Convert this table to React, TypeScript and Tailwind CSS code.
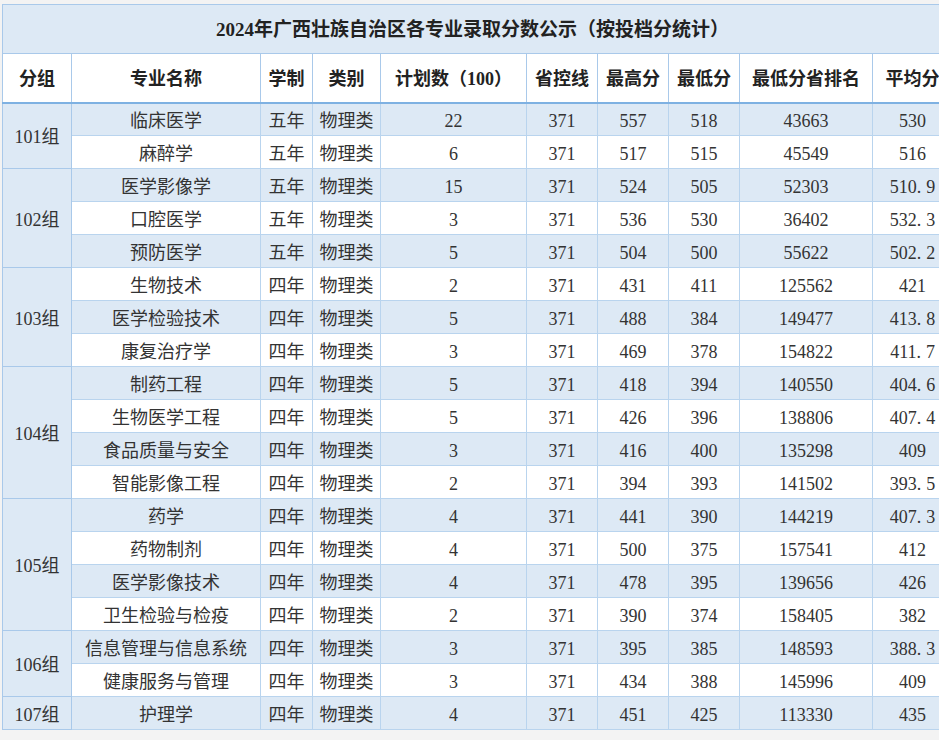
import React from "react";

type Row = [string, string, string, string, string, string, string, string, string];

const groups: { name: string; rows: Row[] }[] = [
  { name: "101组", rows: [
    ["临床医学", "五年", "物理类", "22", "371", "557", "518", "43663", "530"],
    ["麻醉学", "五年", "物理类", "6", "371", "517", "515", "45549", "516"],
  ]},
  { name: "102组", rows: [
    ["医学影像学", "五年", "物理类", "15", "371", "524", "505", "52303", "510.9"],
    ["口腔医学", "五年", "物理类", "3", "371", "536", "530", "36402", "532.3"],
    ["预防医学", "五年", "物理类", "5", "371", "504", "500", "55622", "502.2"],
  ]},
  { name: "103组", rows: [
    ["生物技术", "四年", "物理类", "2", "371", "431", "411", "125562", "421"],
    ["医学检验技术", "四年", "物理类", "5", "371", "488", "384", "149477", "413.8"],
    ["康复治疗学", "四年", "物理类", "3", "371", "469", "378", "154822", "411.7"],
  ]},
  { name: "104组", rows: [
    ["制药工程", "四年", "物理类", "5", "371", "418", "394", "140550", "404.6"],
    ["生物医学工程", "四年", "物理类", "5", "371", "426", "396", "138806", "407.4"],
    ["食品质量与安全", "四年", "物理类", "3", "371", "416", "400", "135298", "409"],
    ["智能影像工程", "四年", "物理类", "2", "371", "394", "393", "141502", "393.5"],
  ]},
  { name: "105组", rows: [
    ["药学", "四年", "物理类", "4", "371", "441", "390", "144219", "407.3"],
    ["药物制剂", "四年", "物理类", "4", "371", "500", "375", "157541", "412"],
    ["医学影像技术", "四年", "物理类", "4", "371", "478", "395", "139656", "426"],
    ["卫生检验与检疫", "四年", "物理类", "2", "371", "390", "374", "158405", "382"],
  ]},
  { name: "106组", rows: [
    ["信息管理与信息系统", "四年", "物理类", "3", "371", "395", "385", "148593", "388.3"],
    ["健康服务与管理", "四年", "物理类", "3", "371", "434", "388", "145996", "409"],
  ]},
  { name: "107组", rows: [
    ["护理学", "四年", "物理类", "4", "371", "451", "425", "113330", "435"],
  ]},
];

const widths = [69, 189, 52, 68, 146, 71, 71, 71, 133, 80];
const headers = ["分组", "专业名称", "学制", "类别", "计划数（100）", "省控线", "最高分", "最低分", "最低分省排名", "平均分"];

const font = { fontFamily: '"Liberation Serif", "Noto Sans CJK SC", serif' };

function Cell({ text }: { text: string }) {
  const dot = text.indexOf(".");
  if (dot >= 0 && /^[0-9.]+$/.test(text)) {
    return (
      <>
        {text.slice(0, dot)}
        <span className="mr-[5px]">.</span>
        {text.slice(dot + 1)}
      </>
    );
  }
  return <>{text}</>;
}

export default function App() {
  let idx = 0;
  return (
    <div className="w-[939px] h-[740px] bg-[#f3f3f3] overflow-hidden pt-[4px] pl-[2px]" style={font}>
      <table className="border-collapse table-fixed w-[950px] text-[18px] text-[#333]">
        <colgroup>
          {widths.map((w, i) => (
            <col key={i} style={{ width: w }} />
          ))}
        </colgroup>
        <tbody>
          <tr className="h-[49px]">
            <td colSpan={10} className="bg-[#dde9f5] border border-[#a9c9ea] text-center font-bold text-[19px] text-[#222] p-0 pt-[2px] pr-[10px]">
              2024年广西壮族自治区各专业录取分数公示（按投档分统计）
            </td>
          </tr>
          <tr className="h-[49px] bg-white">
            {headers.map((h, i) => (
              <td key={i} className="border border-[#a9c9ea] border-b-2 border-b-[#7eb1e2] text-center font-bold text-[18px] text-[#222] whitespace-nowrap p-0 pt-[4px]">
                {h}
              </td>
            ))}
          </tr>
          {groups.map((g) =>
            g.rows.map((r, j) => {
              const blue = idx % 2 === 0;
              idx++;
              return (
                <tr key={g.name + j} className={`h-[33px] ${blue ? "bg-[#dde9f5]" : "bg-white"}`}>
                  {j === 0 && (
                    <td rowSpan={g.rows.length} className="bg-[#dde9f5] border border-[#a9c9ea] text-center text-[#333] p-0 pt-[4px]">
                      {g.name}
                    </td>
                  )}
                  {r.map((c, k) => (
                    <td key={k} className="border border-[#b9d4ee] text-center whitespace-nowrap p-0 pt-[4px] leading-[27px]">
                      <Cell text={c} />
                    </td>
                  ))}
                </tr>
              );
            })
          )}
        </tbody>
      </table>
    </div>
  );
}
